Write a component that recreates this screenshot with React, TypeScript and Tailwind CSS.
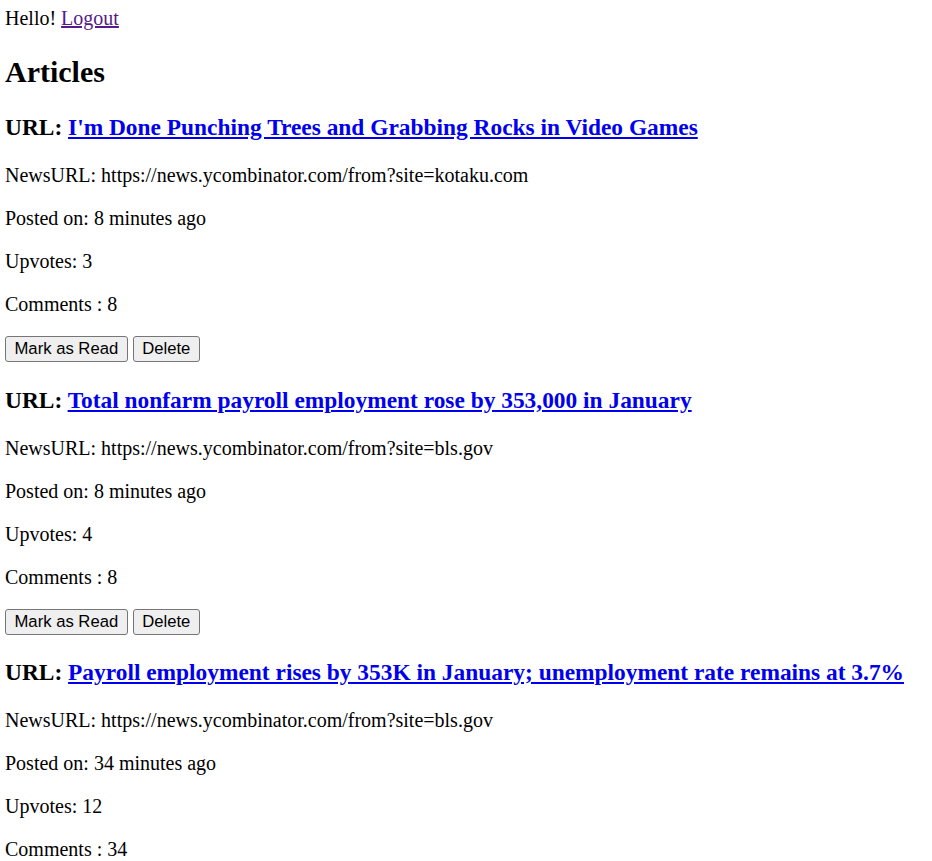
interface Article {
  title: string;
  newsUrl: string;
  postedOn: string;
  upvotes: number;
  comments: number;
}

const articles: Article[] = [
  {
    title: "I'm Done Punching Trees and Grabbing Rocks in Video Games",
    newsUrl: "https://news.ycombinator.com/from?site=kotaku.com",
    postedOn: "8 minutes ago",
    upvotes: 3,
    comments: 8,
  },
  {
    title: "Total nonfarm payroll employment rose by 353,000 in January",
    newsUrl: "https://news.ycombinator.com/from?site=bls.gov",
    postedOn: "8 minutes ago",
    upvotes: 4,
    comments: 8,
  },
  {
    title:
      "Payroll employment rises by 353K in January; unemployment rate remains at 3.7%",
    newsUrl: "https://news.ycombinator.com/from?site=bls.gov",
    postedOn: "34 minutes ago",
    upvotes: 12,
    comments: 34,
  },
];

const btn =
  "h-[26px] px-[8.5px] bg-[#efefef] border border-[#767676] rounded-[3px] text-[16.67px] leading-[20px] text-black font-['Liberation_Sans',Arial,sans-serif]";

const App = () => {
  return (
    <div className="pl-[5px] pt-[7px] bg-white text-black font-['Liberation_Serif','Times_New_Roman',serif] text-[20px] leading-[23px]">
      <div>
        Hello!{" "}
        <a href="#" className="text-[#551a8b] underline">
          Logout
        </a>
      </div>
      <h2 className="text-[30px] font-bold leading-[34.5px] mt-[25px] mb-[24.5px]">
        Articles
      </h2>
      {articles.map((a, i) => (
        <div key={i}>
          <h3 className="text-[23.4px] font-bold leading-[27px] mt-[24.5px] mb-[23px]">
            URL:{" "}
            <a href="#" className="text-[#0000ee] underline">
              {a.title}
            </a>
          </h3>
          <p className="my-[20px]">NewsURL: {a.newsUrl}</p>
          <p className="my-[20px]">Posted on: {a.postedOn}</p>
          <p className="my-[20px]">Upvotes: {a.upvotes}</p>
          <p className="my-[20px]">Comments : {a.comments}</p>
          <div className="flex gap-[5px]">
            <button className={btn}>Mark as Read</button>
            <button className={btn}>Delete</button>
          </div>
        </div>
      ))}
    </div>
  );
};

export default App;
